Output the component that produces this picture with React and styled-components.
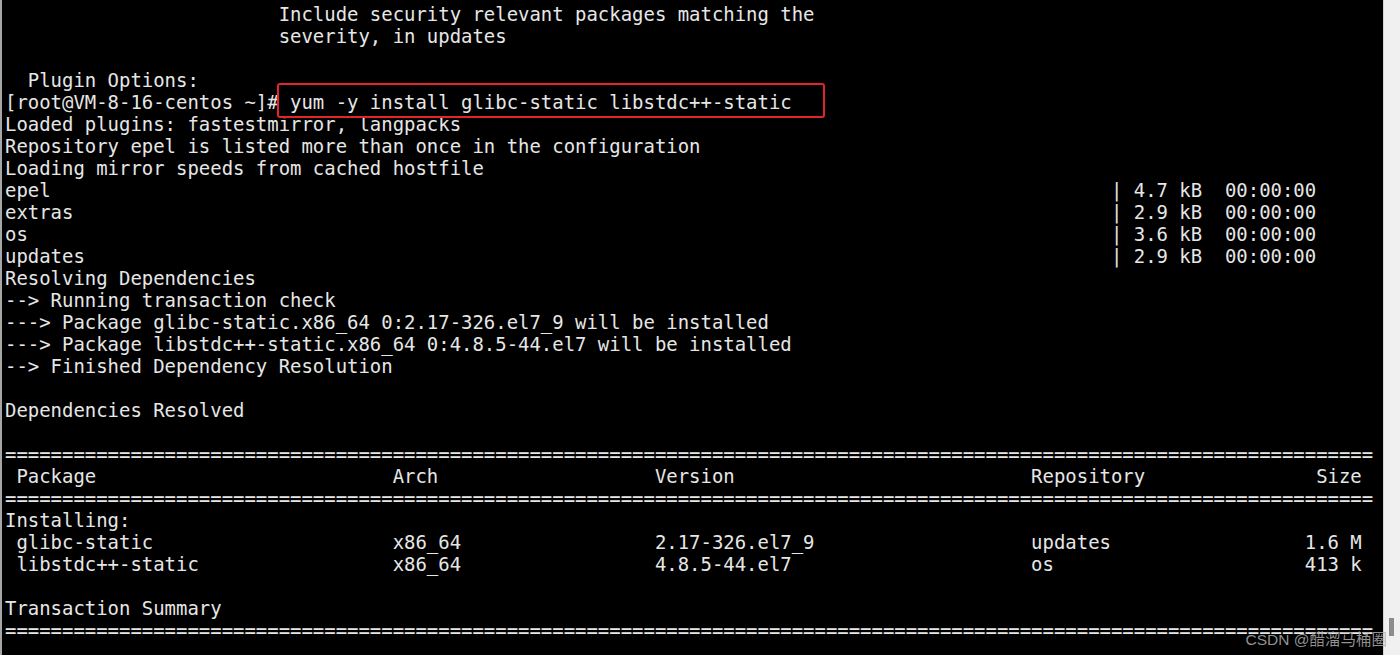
import React from "react";
import styled, { createGlobalStyle } from "styled-components";

const GlobalStyle = createGlobalStyle`
  html, body {
    margin: 0;
    padding: 0;
    background: #000;
    overflow: hidden;
  }
  #root {
    height: 655px;
  }
`;

const Screen = styled.div`
  position: relative;
  display: flex;
  width: 1400px;
  height: 655px;
  overflow: hidden;
`;

const Terminal = styled.pre`
  flex: 1;
  margin: 0;
  padding: 3px 0 0 3px;
  border-left: 2px solid #a6a6a6;
  background: #000;
  color: #e6e6e6;
  font-family: "DejaVu Sans Mono", "Liberation Mono", monospace;
  font-size: 18.95px;
  line-height: 22px;
  white-space: pre;
  overflow: hidden;
`;

const Line = styled.div`
  height: 22px;
`;

const Highlight = styled.span`
  position: relative;
  &::after {
    content: "";
    position: absolute;
    left: -2px;
    right: 1px;
    top: -8px;
    bottom: -5px;
    border: 2.5px solid #e3242b;
    border-radius: 3px;
    pointer-events: none;
  }
`;

const ScrollTrack = styled.div`
  position: relative;
  width: 16px;
  border-left: 1px solid #d4d4d4;
  background: #f0f0f0;
`;

const ScrollThumb = styled.div`
  position: absolute;
  left: 5px;
  top: 618px;
  width: 5px;
  height: 18px;
  background: #8c8c8c;
`;

const Watermark = styled.div`
  position: absolute;
  right: 13px;
  bottom: 6px;
  font-family: "Liberation Sans", "Noto Sans CJK SC", sans-serif;
  font-size: 15.5px;
  color: rgba(175, 175, 175, 0.85);
  white-space: nowrap;
  pointer-events: none;
`;

const W = 120;
const sep = "=".repeat(W);
const pad = (s, n) => s.padEnd(n, " ");

const repoLine = (name, size) => pad(name, 97) + `| ${size}  00:00:00`;

const tableRow = (pkg, arch, ver, repo, size) => {
  const left = pad(" " + pkg, 34) + pad(arch, 23) + pad(ver, 33) + repo;
  return left + size.padStart(119 - left.length, " ");
};

const indent = " ".repeat(24);

const lines = [
  indent + "Include security relevant packages matching the",
  indent + "severity, in updates",
  "",
  "  Plugin Options:",
  "__PROMPT__",
  "Loaded plugins: fastestmirror, langpacks",
  "Repository epel is listed more than once in the configuration",
  "Loading mirror speeds from cached hostfile",
  repoLine("epel", "4.7 kB"),
  repoLine("extras", "2.9 kB"),
  repoLine("os", "3.6 kB"),
  repoLine("updates", "2.9 kB"),
  "Resolving Dependencies",
  "--> Running transaction check",
  "---> Package glibc-static.x86_64 0:2.17-326.el7_9 will be installed",
  "---> Package libstdc++-static.x86_64 0:4.8.5-44.el7 will be installed",
  "--> Finished Dependency Resolution",
  "",
  "Dependencies Resolved",
  "",
  sep,
  tableRow("Package", "Arch", "Version", "Repository", "Size"),
  sep,
  "Installing:",
  tableRow("glibc-static", "x86_64", "2.17-326.el7_9", "updates", "1.6 M"),
  tableRow("libstdc++-static", "x86_64", "4.8.5-44.el7", "os", "413 k"),
  "",
  "Transaction Summary",
  sep,
  "",
];

export default function App() {
  return (
    <>
      <GlobalStyle />
      <Screen>
        <Terminal>
          {lines.map((l, i) =>
            l === "__PROMPT__" ? (
              <Line key={i}>
                {"[root@VM-8-16-centos ~]#"}
                <Highlight>{" yum -y install glibc-static libstdc++-static   "}</Highlight>
              </Line>
            ) : (
              <Line key={i}>{l}</Line>
            )
          )}
        </Terminal>
        <ScrollTrack>
          <ScrollThumb />
        </ScrollTrack>
        <Watermark>CSDN @醋溜马桶圈</Watermark>
      </Screen>
    </>
  );
}
